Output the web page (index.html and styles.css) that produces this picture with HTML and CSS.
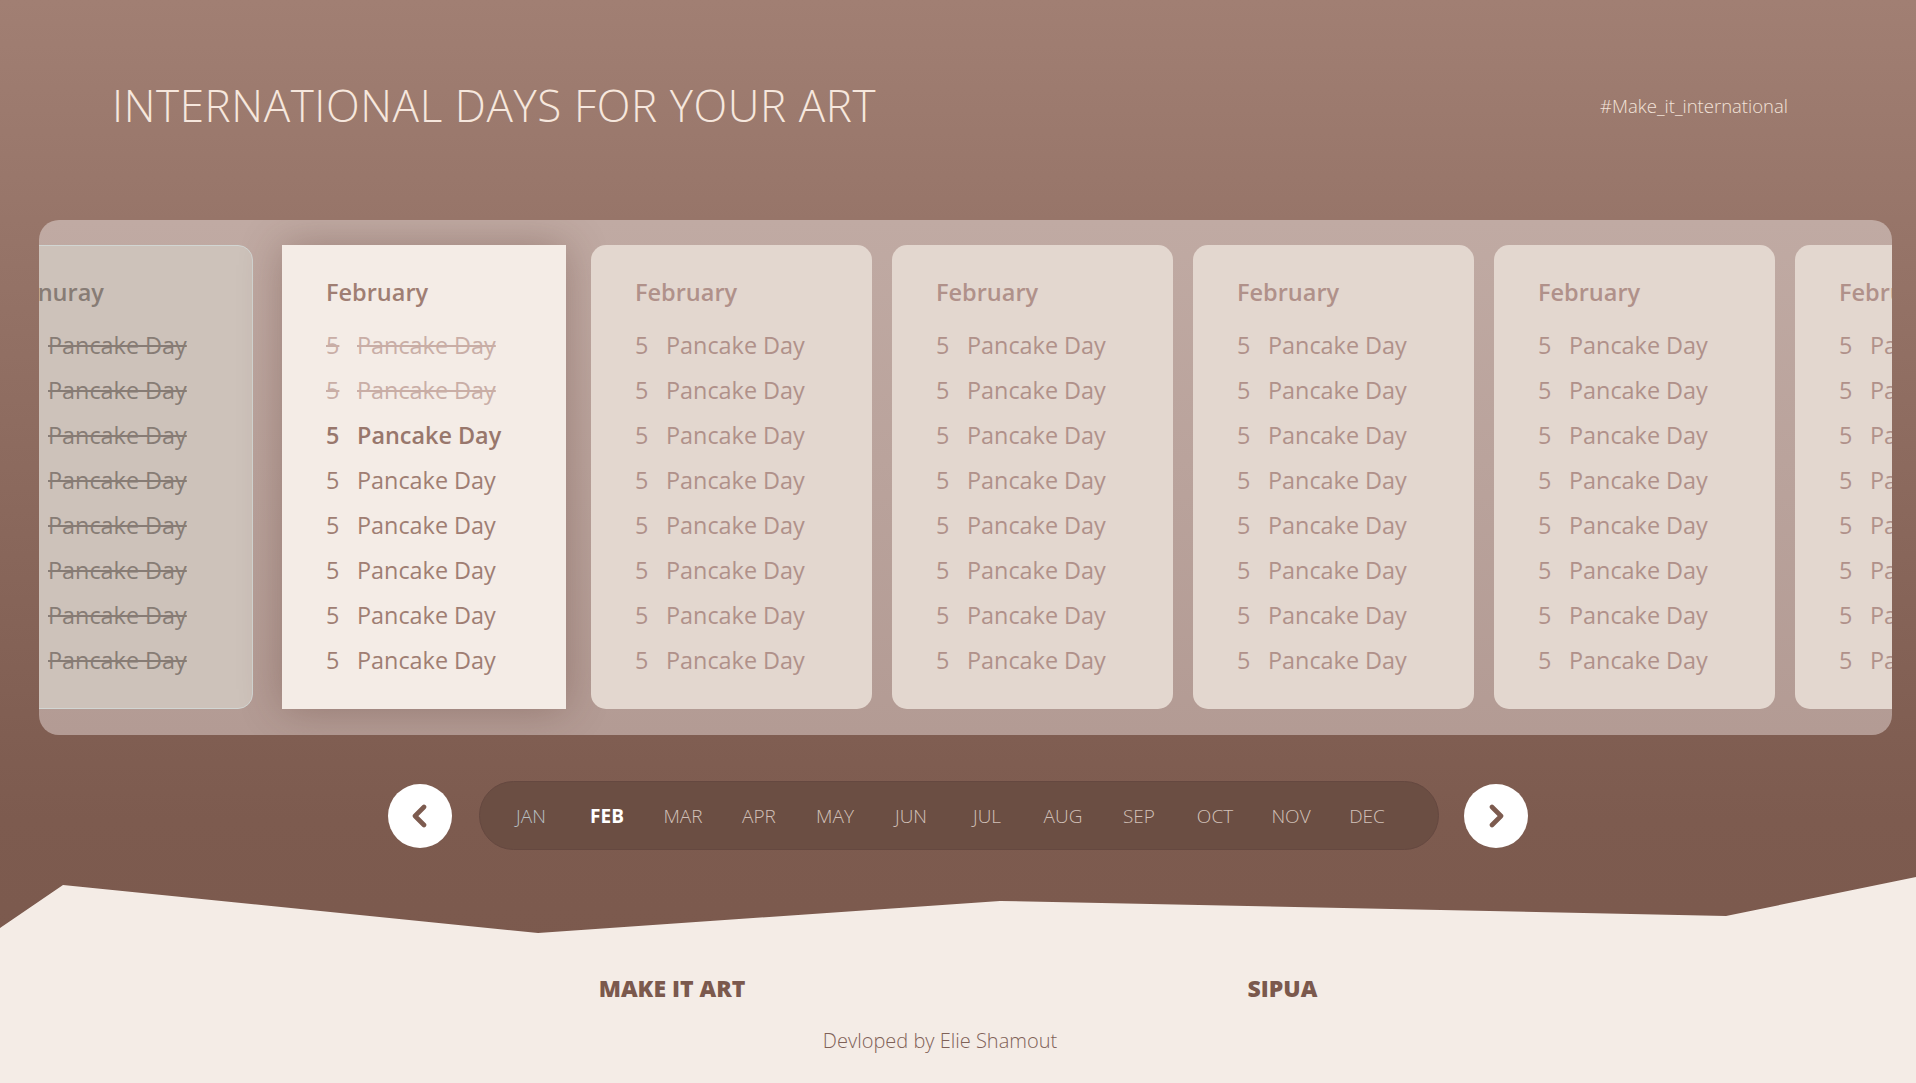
FILE: index.html
```html
<!DOCTYPE html>
<html lang="en">
<head>
<meta charset="utf-8">
<title>International Days For Your Art</title>
<link rel="stylesheet" href="styles.css">
</head>
<body>
<header class="top">
  <h1 class="title">INTERNATIONAL DAYS FOR YOUR ART</h1>
  <span class="tag">#Make_it_international</span>
</header>

<section class="carousel">
  <div class="track">
    <article class="card card-past">
      <h2 class="month">Januray</h2>
      <ul class="days">
        <li class="day done"><span class="num">5</span><span class="name">Pancake Day</span></li>
        <li class="day done"><span class="num">5</span><span class="name">Pancake Day</span></li>
        <li class="day done"><span class="num">5</span><span class="name">Pancake Day</span></li>
        <li class="day done"><span class="num">5</span><span class="name">Pancake Day</span></li>
        <li class="day done"><span class="num">5</span><span class="name">Pancake Day</span></li>
        <li class="day done"><span class="num">5</span><span class="name">Pancake Day</span></li>
        <li class="day done"><span class="num">5</span><span class="name">Pancake Day</span></li>
        <li class="day done"><span class="num">5</span><span class="name">Pancake Day</span></li>
      </ul>
    </article>

    <article class="card card-current">
      <h2 class="month">February</h2>
      <ul class="days">
        <li class="day done"><span class="num">5</span><span class="name">Pancake Day</span></li>
        <li class="day done"><span class="num">5</span><span class="name">Pancake Day</span></li>
        <li class="day today"><span class="num">5</span><span class="name">Pancake Day</span></li>
        <li class="day"><span class="num">5</span><span class="name">Pancake Day</span></li>
        <li class="day"><span class="num">5</span><span class="name">Pancake Day</span></li>
        <li class="day"><span class="num">5</span><span class="name">Pancake Day</span></li>
        <li class="day"><span class="num">5</span><span class="name">Pancake Day</span></li>
        <li class="day"><span class="num">5</span><span class="name">Pancake Day</span></li>
      </ul>
    </article>

    <article class="card">
      <h2 class="month">February</h2>
      <ul class="days">
        <li class="day"><span class="num">5</span><span class="name">Pancake Day</span></li>
        <li class="day"><span class="num">5</span><span class="name">Pancake Day</span></li>
        <li class="day"><span class="num">5</span><span class="name">Pancake Day</span></li>
        <li class="day"><span class="num">5</span><span class="name">Pancake Day</span></li>
        <li class="day"><span class="num">5</span><span class="name">Pancake Day</span></li>
        <li class="day"><span class="num">5</span><span class="name">Pancake Day</span></li>
        <li class="day"><span class="num">5</span><span class="name">Pancake Day</span></li>
        <li class="day"><span class="num">5</span><span class="name">Pancake Day</span></li>
      </ul>
    </article>

    <article class="card">
      <h2 class="month">February</h2>
      <ul class="days">
        <li class="day"><span class="num">5</span><span class="name">Pancake Day</span></li>
        <li class="day"><span class="num">5</span><span class="name">Pancake Day</span></li>
        <li class="day"><span class="num">5</span><span class="name">Pancake Day</span></li>
        <li class="day"><span class="num">5</span><span class="name">Pancake Day</span></li>
        <li class="day"><span class="num">5</span><span class="name">Pancake Day</span></li>
        <li class="day"><span class="num">5</span><span class="name">Pancake Day</span></li>
        <li class="day"><span class="num">5</span><span class="name">Pancake Day</span></li>
        <li class="day"><span class="num">5</span><span class="name">Pancake Day</span></li>
      </ul>
    </article>

    <article class="card">
      <h2 class="month">February</h2>
      <ul class="days">
        <li class="day"><span class="num">5</span><span class="name">Pancake Day</span></li>
        <li class="day"><span class="num">5</span><span class="name">Pancake Day</span></li>
        <li class="day"><span class="num">5</span><span class="name">Pancake Day</span></li>
        <li class="day"><span class="num">5</span><span class="name">Pancake Day</span></li>
        <li class="day"><span class="num">5</span><span class="name">Pancake Day</span></li>
        <li class="day"><span class="num">5</span><span class="name">Pancake Day</span></li>
        <li class="day"><span class="num">5</span><span class="name">Pancake Day</span></li>
        <li class="day"><span class="num">5</span><span class="name">Pancake Day</span></li>
      </ul>
    </article>

    <article class="card">
      <h2 class="month">February</h2>
      <ul class="days">
        <li class="day"><span class="num">5</span><span class="name">Pancake Day</span></li>
        <li class="day"><span class="num">5</span><span class="name">Pancake Day</span></li>
        <li class="day"><span class="num">5</span><span class="name">Pancake Day</span></li>
        <li class="day"><span class="num">5</span><span class="name">Pancake Day</span></li>
        <li class="day"><span class="num">5</span><span class="name">Pancake Day</span></li>
        <li class="day"><span class="num">5</span><span class="name">Pancake Day</span></li>
        <li class="day"><span class="num">5</span><span class="name">Pancake Day</span></li>
        <li class="day"><span class="num">5</span><span class="name">Pancake Day</span></li>
      </ul>
    </article>

    <article class="card">
      <h2 class="month">February</h2>
      <ul class="days">
        <li class="day"><span class="num">5</span><span class="name">Pancake Day</span></li>
        <li class="day"><span class="num">5</span><span class="name">Pancake Day</span></li>
        <li class="day"><span class="num">5</span><span class="name">Pancake Day</span></li>
        <li class="day"><span class="num">5</span><span class="name">Pancake Day</span></li>
        <li class="day"><span class="num">5</span><span class="name">Pancake Day</span></li>
        <li class="day"><span class="num">5</span><span class="name">Pancake Day</span></li>
        <li class="day"><span class="num">5</span><span class="name">Pancake Day</span></li>
        <li class="day"><span class="num">5</span><span class="name">Pancake Day</span></li>
      </ul>
    </article>
  </div>
</section>

<nav class="months">
  <button class="arrow arrow-prev" type="button" aria-label="Previous month">
    <svg width="24" height="24" viewBox="0 0 24 24"><polyline points="16,3 7,12 16,21" fill="none" stroke="#7d5b4f" stroke-width="4.6" stroke-linecap="round" stroke-linejoin="round"/></svg>
  </button>
  <ul class="month-list">
    <li class="seen">JAN</li>
    <li class="active">FEB</li>
    <li>MAR</li>
    <li>APR</li>
    <li>MAY</li>
    <li>JUN</li>
    <li>JUL</li>
    <li>AUG</li>
    <li>SEP</li>
    <li>OCT</li>
    <li>NOV</li>
    <li>DEC</li>
  </ul>
  <button class="arrow arrow-next" type="button" aria-label="Next month">
    <svg width="24" height="24" viewBox="0 0 24 24"><polyline points="8,3 17,12 8,21" fill="none" stroke="#7d5b4f" stroke-width="4.6" stroke-linecap="round" stroke-linejoin="round"/></svg>
  </button>
</nav>

<footer class="foot">
  <div class="brands">
    <span class="brand">MAKE IT ART</span>
    <span class="brand">SIPUA</span>
  </div>
  <p class="credit">Devloped by Elie Shamout</p>
</footer>
</body>
</html>
```

FILE: styles.css
```css
html, body {
  margin: 0;
  padding: 0;
}

body {
  height: 1083px;
  overflow: hidden;
  font-family: "Open Sans", "Noto Sans", sans-serif;
  background: linear-gradient(180deg, #a17f73 0px, #977569 220px, #805e52 735px, #7d5b4f 820px, #7a584c 1083px);
}

/* Header */
.top {
  display: flex;
  justify-content: space-between;
  align-items: center;
  height: 60px;
  padding: 75px 128px 0 112px;
}

.title {
  margin: 0;
  font-size: 44px;
  line-height: 60px;
  font-weight: 350;
  letter-spacing: 0.6px;
  color: #f6e7dd;
  white-space: nowrap;
}

.tag {
  font-size: 18.5px;
  font-weight: 350;
  color: #f3e3d9;
}

/* Carousel */
.carousel {
  margin: 85px 24px 0 39px;
  height: 515px;
  box-sizing: border-box;
  padding: 25px 0 26px;
  border-radius: 20px;
  overflow: hidden;
  background: linear-gradient(180deg, #c0aaa3 0%, #b39b94 100%);
}

.track {
  display: flex;
  gap: 20px;
  height: 464px;
  margin-left: -66px;
}

.card {
  flex: 0 0 281px;
  box-sizing: border-box;
  padding: 32px 0 0 44px;
  border-radius: 15px;
  background: #e3d7cf;
  color: #b0918a;
}

.card-past {
  flex-basis: 280px;
  margin-right: 9px;
  padding: 31px 0 0 43px;
  background: #cdc2ba;
  border: 1px solid #d2d6d3;
  color: #877c75;
}

.card-current {
  flex-basis: 284px;
  margin-right: 5px;
  border-radius: 0;
  background: #f4ece6;
  color: #9f7e73;
  box-shadow: 0 0 40px rgba(80, 45, 35, 0.32);
}

.month {
  margin: 0 0 16px;
  font-size: 23.5px;
  line-height: 30px;
  font-weight: 600;
  white-space: nowrap;
}

.days {
  list-style: none;
  margin: 0;
  padding: 0;
}

.day {
  display: flex;
  font-size: 23.4px;
  line-height: 45px;
  white-space: nowrap;
}

.num {
  flex: none;
  width: 31px;
}

.done .num,
.done .name {
  text-decoration: line-through;
  text-decoration-thickness: 1.5px;
}

.card-current .done {
  color: #c9aea6;
}

.card-current .today {
  font-weight: 600;
  color: #98776c;
}

/* Month navigation */
.months {
  display: flex;
  justify-content: center;
  align-items: center;
  height: 69px;
  margin-top: 46px;
}

.arrow {
  display: flex;
  align-items: center;
  justify-content: center;
  width: 64px;
  height: 64px;
  padding: 0;
  border: 0;
  border-radius: 50%;
  background: #ffffff;
}

.arrow-prev {
  margin-right: 27px;
}

.arrow-next {
  margin-left: 25px;
}

.month-list {
  display: flex;
  align-items: center;
  list-style: none;
  height: 69px;
  box-sizing: border-box;
  margin: 0;
  padding: 0 33px 0 13px;
  border-radius: 35px;
  background: #6b4e43;
  border: 1px solid #654840;
}

.month-list li {
  width: 76px;
  text-align: center;
  font-size: 19px;
  font-weight: 350;
  color: #d2c1b9;
}

.month-list .seen {
  color: #b8c0c4;
}

.month-list .active {
  font-weight: 700;
  color: #ffffff;
}

/* Footer */
.foot {
  height: 206px;
  box-sizing: border-box;
  margin-top: 27px;
  padding-top: 95px;
  background: #f4ece6;
  clip-path: polygon(0 51px, 63px 8px, 538px 56px, 1000px 24px, 1726px 39px, 100% 0, 100% 100%, 0 100%);
}

.brands {
  display: flex;
  justify-content: center;
  gap: 502px;
}

.brand {
  font-size: 23px;
  line-height: 32px;
  font-weight: 800;
  color: #7b594d;
}

.credit {
  margin: 23px 0 0;
  padding-right: 36px;
  text-align: center;
  font-size: 20px;
  line-height: 28px;
  font-weight: 300;
  color: #7f6157;
}
```
